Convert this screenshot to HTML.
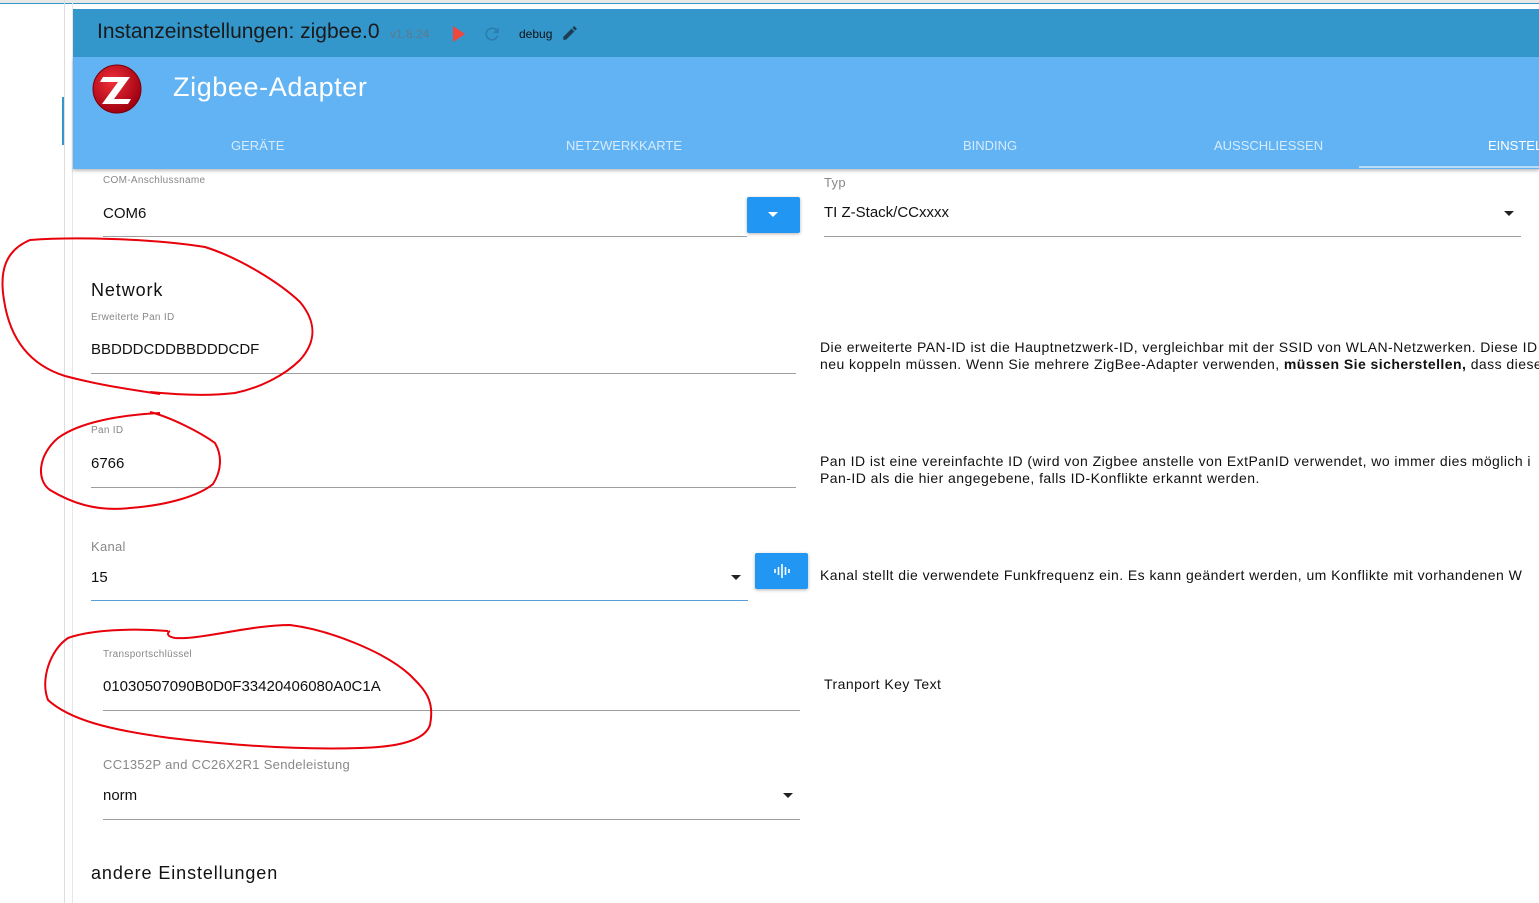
<!DOCTYPE html>
<html><head><meta charset="utf-8"><style>
*{margin:0;padding:0;box-sizing:border-box}
body{width:1539px;height:903px;overflow:hidden;background:#fff;font-family:"Liberation Sans","DejaVu Sans",sans-serif;position:relative;color:#222}
.a{position:absolute;white-space:nowrap}
.lbl{font-size:11px;color:#888;letter-spacing:.3px}
.val{font-size:15px;color:#111}
.ln{position:absolute;height:1px;background:#9e9e9e}
.desc{font-size:14px;color:#111;line-height:17px;letter-spacing:.45px}
.tab{font-size:13px;color:#d6ecfd;top:138px}
.h{font-size:18px;color:#111;letter-spacing:.9px}
</style></head><body>
<div class="a" style="left:0;top:0;width:1539px;height:4px;background:#e8e8e8;border-bottom:1px solid #3397cc"></div>
<div class="a" style="left:64px;top:0;width:1px;height:903px;background:#ddd"></div>
<div class="a" style="left:72px;top:0;width:1px;height:903px;background:#e6e6e6"></div>
<div class="a" style="left:62px;top:97px;width:2px;height:48px;background:#3397cc"></div>
<div class="a" style="left:73px;top:9px;width:1466px;height:48px;background:#3397cc"></div>
<div class="a" style="left:73px;top:57px;width:1466px;height:112px;background:#62b3f4;box-shadow:0 2px 3px rgba(0,0,0,.25)"></div>
<div class="a" style="left:97px;top:20px;font-size:21px;color:#1a1a1a">Instanzeinstellungen: zigbee.0</div>
<div class="a" style="left:390px;top:27px;font-size:12px;color:#5d7b8d">v1.8.24</div>
<svg class="a" style="left:452px;top:26px" width="14" height="16"><path d="M1 0L13 8L1 16Z" fill="#f0463c"/></svg>
<svg class="a" style="left:482px;top:24px" width="20" height="20" viewBox="0 0 24 24"><path d="M17.65 6.35A7.950 7.95 0 0 0 12 4a8 8 0 1 0 7.730 10h-2.08A6 6 0 1 1 12 6c1.66 0 3.14.69 4.22 1.78L13 11h7V4l-2.35 2.35z" fill="#2a7fad"/></svg>
<div class="a" style="left:519px;top:27px;font-size:12px;color:#111">debug</div>
<svg class="a" style="left:561px;top:24px" width="18" height="18" viewBox="0 0 24 24"><path d="M3 17.25V21h3.75L17.81 9.94l-3.75-3.75L3 17.25zM20.71 7.04a1 1 0 0 0 0-1.41l-2.34-2.34a1 1 0 0 0-1.41 0l-1.83 1.83 3.75 3.75 1.83-1.83z" fill="#1f3d52"/></svg>
<svg class="a" style="left:91px;top:64px" width="52" height="50"><defs><radialGradient id="g" cx="40%" cy="35%" r="65%"><stop offset="0" stop-color="#f0303a"/><stop offset="1" stop-color="#a00010"/></radialGradient></defs><ellipse cx="26" cy="25" rx="24" ry="24" fill="url(#g)" stroke="#7a000a"/><path d="M12 13H39L23 35H40L37 40H11L27 18H9Z" fill="#fff"/></svg>
<div class="a" style="left:173px;top:72px;font-size:27px;color:#fff;letter-spacing:.6px">Zigbee-Adapter</div>
<div class="a tab" style="left:231px">GERÄTE</div>
<div class="a tab" style="left:566px">NETZWERKKARTE</div>
<div class="a tab" style="left:963px">BINDING</div>
<div class="a tab" style="left:1214px">AUSSCHLIESSEN</div>
<div class="a tab" style="left:1488px;color:#fff">EINSTEL</div>
<div class="a" style="left:1359px;top:166px;width:180px;height:2px;background:#b8dcfa"></div>

<div class="a lbl" style="left:103px;top:175px;font-size:10px">COM-Anschlussname</div>
<div class="a val" style="left:103px;top:205px">COM6</div>
<div class="ln" style="left:103px;top:236px;width:644px"></div>
<div class="a" style="left:747px;top:197px;width:53px;height:36px;background:#2196f3;border-radius:2px;box-shadow:0 1px 3px rgba(0,0,0,.3)"></div>
<svg class="a" style="left:768px;top:212px" width="10" height="5"><path d="M0 0H10L5 5Z" fill="#fff"/></svg>
<div class="a lbl" style="left:824px;top:175px;font-size:13px">Typ</div>
<div class="a val" style="left:824px;top:204px">TI Z-Stack/CCxxxx</div>
<svg class="a" style="left:1504px;top:211px" width="10" height="5"><path d="M0 0H10L5 5Z" fill="#222"/></svg>
<div class="ln" style="left:824px;top:236px;width:697px"></div>

<div class="a h" style="left:91px;top:280px">Network</div>
<div class="a lbl" style="left:91px;top:312px;font-size:10px">Erweiterte Pan ID</div>
<div class="a val" style="left:91px;top:341px">BBDDDCDDBBDDDCDF</div>
<div class="ln" style="left:91px;top:373px;width:705px"></div>
<div class="a desc" style="left:820px;top:339px">Die erweiterte PAN-ID ist die Hauptnetzwerk-ID, vergleichbar mit der SSID von WLAN-Netzwerken. Diese ID<br>neu koppeln müssen. Wenn Sie mehrere ZigBee-Adapter verwenden, <b>müssen Sie sicherstellen,</b> dass diese</div>

<div class="a lbl" style="left:91px;top:425px;font-size:10px">Pan ID</div>
<div class="a val" style="left:91px;top:455px">6766</div>
<div class="ln" style="left:91px;top:487px;width:705px"></div>
<div class="a desc" style="left:820px;top:453px">Pan ID ist eine vereinfachte ID (wird von Zigbee anstelle von ExtPanID verwendet, wo immer dies möglich i<br>Pan-ID als die hier angegebene, falls ID-Konflikte erkannt werden.</div>

<div class="a lbl" style="left:91px;top:539px;font-size:13px">Kanal</div>
<div class="a val" style="left:91px;top:569px">15</div>
<svg class="a" style="left:731px;top:575px" width="10" height="5"><path d="M0 0H10L5 5Z" fill="#222"/></svg>
<div class="ln" style="left:91px;top:600px;width:657px;background:#5a9fd8"></div>
<div class="a" style="left:755px;top:553px;width:53px;height:36px;background:#2196f3;border-radius:2px;box-shadow:0 1px 3px rgba(0,0,0,.3)"></div>
<svg class="a" style="left:773px;top:562px" width="18" height="18"><g stroke="#fff" stroke-width="1.6"><path d="M2 7V11M5.5 5V13M9 2V16M12.5 5V13M16 7V11"/></g></svg>
<div class="a desc" style="left:820px;top:567px">Kanal stellt die verwendete Funkfrequenz ein. Es kann geändert werden, um Konflikte mit vorhandenen W</div>

<div class="a lbl" style="left:103px;top:649px;font-size:10px">Transportschlüssel</div>
<div class="a val" style="left:103px;top:678px">01030507090B0D0F33420406080A0C1A</div>
<div class="ln" style="left:103px;top:710px;width:697px"></div>
<div class="a desc" style="left:824px;top:676px">Tranport Key Text</div>

<div class="a lbl" style="left:103px;top:757px;font-size:13px">CC1352P and CC26X2R1 Sendeleistung</div>
<div class="a val" style="left:103px;top:787px">norm</div>
<svg class="a" style="left:783px;top:793px" width="10" height="5"><path d="M0 0H10L5 5Z" fill="#222"/></svg>
<div class="ln" style="left:103px;top:819px;width:697px"></div>

<div class="a h" style="left:91px;top:863px">andere Einstellungen</div>

<svg class="a" style="left:0;top:0" width="1539" height="903"><g fill="none" stroke="#e8000a" stroke-width="2">
<path d="M160 394C120 388 95 384 65 376C30 365 10 340 4 300C-1 270 6 250 30 240C70 237 150 238 205 247C240 258 280 283 300 302C315 320 318 340 300 360C285 375 260 388 235 393C210 396 180 395 150 392"/>
<path d="M160 413C120 415 80 422 58 438C38 455 36 480 50 490C70 502 95 512 130 508C170 505 200 495 213 484C222 470 222 455 215 443C200 432 170 417 150 412"/>
<path d="M168 631C130 628 90 630 68 638C50 650 40 680 48 700C70 720 110 730 170 738C230 745 300 750 360 748C400 747 425 740 430 725C435 700 425 690 410 675C385 652 330 630 290 625C250 625 200 640 175 638C165 636 168 632 170 631"/>
</g></svg>
</body></html>
